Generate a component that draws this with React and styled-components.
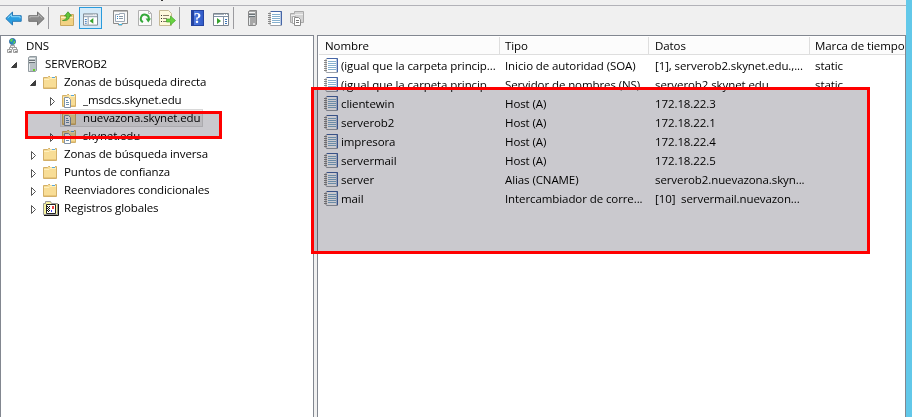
import React from 'react';
import styled, { createGlobalStyle } from 'styled-components';

const Global = createGlobalStyle`
  * { box-sizing: border-box; }
  body { margin: 0; overflow: hidden; background: #f0f0f0; }
`;

const Window = styled.div`
  position: relative;
  width: 912px;
  height: 417px;
  display: flex;
  overflow: hidden;
  background: #62c8e9;
  color: #000;
  font: 11.5px/18px "Open Sans", "Noto Sans", sans-serif;
  letter-spacing: -0.09px;
  white-space: pre;
`;
const Console = styled.div`
  width: 906px;
  display: flex;
  flex-direction: column;
  background: #f0f0f0;
`;
const MenuEdge = styled.div`
  height: 6px;
  padding-left: 161px;
  border-bottom: 1px solid #b2b2b8;
`;
const Descender = styled.i`
  display: block;
  width: 2px;
  height: 1px;
  background: #333;
`;
const Toolbar = styled.div`
  height: 29px;
  flex: none;
  display: flex;
  align-items: flex-start;
  padding-left: 5px;
`;
const Tool = styled.span`
  display: flex;
  flex: none;
  margin-top: ${p => p.$top ?? 4}px;
  margin-left: ${p => p.$gap ?? 0}px;
`;
const Pressed = styled(Tool)`
  width: 23px;
  height: 22px;
  padding: 5px 3px;
  background: #d5eaf8;
  border: 1px solid #2a9bdc;
`;
const Divider = styled.i`
  width: 1px;
  height: 22px;
  margin-top: 1px;
  margin-left: ${p => p.$gap}px;
  background: #9b9b9f;
`;
const Panes = styled.div`
  flex: 1;
  display: flex;
  gap: 3px;
`;
const TreePane = styled.div`
  width: 314px;
  padding-top: 1px;
  background: #fff;
  border: solid #828790;
  border-width: 1px 1px 0;
`;
const ListPane = styled.div`
  width: 589px;
  padding: 1px 0 0 1px;
  background: #fff;
  border: solid #828790;
  border-width: 1px 1px 0;
  overflow: hidden;
`;
const TreeRow = styled.div`
  height: 18px;
  display: flex;
  align-items: center;
  padding-left: ${p => p.$indent}px;
`;
const Arrow = styled.span`
  width: 13px;
  display: flex;
  flex: none;
  padding: ${p => (p.$open ? '1px 0 0' : '2px 0 0 1px')};
`;
const Node = styled.span`
  height: 18px;
  display: flex;
  align-items: center;
  padding: 0 3px 0 ${p => (p.$on ? 2 : 1)}px;
  background: ${p => (p.$on ? '#ededed' : 'transparent')};
  box-shadow: ${p => (p.$on ? 'inset 0 0 0 1px #d8d8d8' : 'none')};
`;
const NodeIcon = styled.span`
  width: ${p => p.$w ?? 21}px;
  display: flex;
  flex: none;
`;
const Label = styled.span`
  letter-spacing: ${p => (p.$tree ? -0.13 : -0.09)}px;
`;
const Grid = styled.div`
  display: grid;
  grid-template-columns: 181px 149px 161px 110px;
`;
const Header = styled(Grid)`
  height: 18px;
  margin-bottom: 1px;
  border-bottom: 1px solid #dedede;
  background: #fcfcfc;
`;
const HeadCell = styled.div`
  line-height: 18px;
  padding-left: ${p => (p.$wide ? 6 : 5)}px;
  border-right: 1px solid #dedede;
`;
const Row = styled(Grid)`
  height: 19px;
  line-height: 19px;
`;
const Cell = styled.div`
  display: flex;
  align-items: center;
  gap: 3px;
  padding-left: ${p => (p.$wide ? 6 : 5)}px;
`;
const Marker = styled.div`
  position: absolute;
  left: ${p => p.$x}px;
  top: ${p => p.$y}px;
  width: ${p => p.$w}px;
  height: ${p => p.$h}px;
  background: #cac9ce;
  mix-blend-mode: multiply;
`;
const Outline = styled(Marker)`
  background: none;
  border: 3px solid #f00;
  mix-blend-mode: normal;
`;

const Svg = ({ w = 16, h = 16, children }) => (
  <svg width={w} height={h} viewBox={`0 0 ${w} ${h}`} fill="none">{children}</svg>
);
const BigArrow = ({ fill, light, stroke, flip }) => (
  <Svg w={17} h={15}>
    <g transform={flip ? 'translate(17 0) scale(-1 1)' : undefined}>
      <path d="M.8 7.5 7.5 1v3.7h8.7v5.6H7.5V14z" fill={fill} stroke={stroke} />
      <path d="m2.7 7 3.8-3.6v2.3h8.6v1.6" stroke={light} />
    </g>
  </Svg>
);
const FolderShape = () => (
  <>
    <path d="M.5 13.5v-11h4l1-1h8v12z" fill="#f8dd96" stroke="#d3b069" />
    <path d="M1 4.5h5l1-1h6" stroke="#fff0bd" />
    <path d="M7 1.5h5" stroke="#fff" /><path d="M9 2.5h3" stroke="#59a5d8" />
    <path d="M1 12.5h12" stroke="#e9c679" />
  </>
);
const Folder = () => <Svg w={14} h={14}><FolderShape /></Svg>;
const Zone = () => (
  <Svg w={14} h={15}>
    <FolderShape />
    <path d="M2.5 4.5h4l2 2v8h-6z" fill="#fff" stroke="#8293a6" />
    <path d="M4 7.5h2M4 9.5h3M4 11.5h3" stroke="#6f90b0" />
  </Svg>
);
const Up = () => (
  <Svg w={15} h={15}>
    <path d="M.5 14.5v-10h5l1-1h7v11z" fill="#f2d283" stroke="#c9a860" />
    <path d="M1 6.5h12" stroke="#fff0bd" />
    <path d="M2.5 9.5C6 9 6.5 7 6.5 5h-2L8 .8 11.5 5h-2c0 3-2 5-7 4.500z" fill="#62c438" stroke="#328d24" strokeWidth=".7" />
  </Svg>
);
const Panel = ({ flip }) => (
  <Svg w={16} h={13}>
    <path d="M.5.5h15v12H.5z" fill="#fff" stroke="#7b858f" />
    <path d="M1 1.500h14" stroke="#a7b2bd" /><path d="M1 3.500h14" stroke="#7f91a6" />
    <path d="M11 1.500h1m1 0h1" stroke="#fff" />
    {flip ? (
      <><path d="M10.5 4v8" stroke="#8795a5" /><path d="M4 5v6l4-3z" fill="#37a22d" /><path d="M12 6.500h2M12 8.500h2M12 10.500h2" stroke="#3b75b7" /></>
    ) : (
      <><path d="M5.500 4v8" stroke="#8795a5" /><path d="M11 5v6L7 8z" fill="#37a22d" /><path d="M2 6.500h2M2 8.500h2M2 10.500h2" stroke="#3b75b7" /></>
    )}
  </Svg>
);
const Props = () => (
  <Svg w={15} h={16}>
    <path d="M.5.5h14v13H9v1.500H5.500v-1.500h-5z" fill="#f8f8f8" stroke="#8b8b8b" />
    <path d="M1 1.500h13" stroke="#bbb" />
    <path d="M2.500 4.500h4v-1h5v8h-9z" fill="#fff" stroke="#9da9b7" />
    <path d="M4 6.500h1M4 8.500h1" stroke="#3186c8" /><path d="M6 6.500h4M6 8.500h4" stroke="#8797a6" />
    <path d="M6 14.500h3" stroke="#31bde8" />
  </Svg>
);
const Refresh = () => (
  <Svg w={14} h={16}>
    <path d="M.5.5h10l3 3v12H.5z" fill="#fbfbfb" stroke="#b0b0b0" />
    <path d="M10.5.5v3h3" stroke="#bbb" />
    <path d="M5 12.200A4 4 0 1 1 10.800 9" stroke="#35a93b" strokeWidth="2" />
    <path d="M7.600 8.500H13L10.300 12.500z" fill="#35a93b" />
  </Svg>
);
const Export = () => (
  <Svg w={17} h={16}>
    <path d="M.5.5h9l3 3v12H.5z" fill="#fff9dc" stroke="#c6b994" />
    <path d="M2 5.500h1M2 8.500h1M2 11.500h1" stroke="#333" /><path d="M4 5.500h6M4 8.500h4M4 11.500h4" stroke="#8c806a" />
    <path d="M7.500 9h4V6l5 4.500-5 4.500v-3h-4z" fill="#68d340" stroke="#43a52a" strokeWidth=".7" />
  </Svg>
);
const HelpBox = styled.span`
  width: 13px;
  height: 16px;
  background: linear-gradient(90deg, #2443a0 2px, #4d78df 2px, #305bc8);
  border: 1px solid #2443a0;
  color: #fff;
  font: bold 15px/14px "Liberation Serif", serif;
  text-align: center;
`;
const Server = ({ gray }) => (
  <Svg w={9} h={16}>
    <path d="M.5 1.500 2 .5h6.500v14l-1 1h-7z" fill={gray ? '#a7a7a7' : '#b9c1c5'} stroke={gray ? '#888' : '#929ba0'} />
    <path d="M1 2.500h6" stroke="#f2f4f4" /><path d="M1 4.500h6M1 6.500h6" stroke="#697277" /><path d="M1 5.500h6" stroke="#e5e8e9" />
    <path d="M1.500 8v7" stroke="#e6eaec" /><path d="M5 13h2v2H5z" fill={gray ? '#ddd' : '#62d42c'} />
  </Svg>
);
const Notebook = () => (
  <Svg w={14} h={15}>
    <path d="M2.500.5h11v14h-11z" fill="#fff" stroke="#9ba1aa" />
    <path d="M3 .5h10.500V14" stroke="#4666a7" /><path d="M12.500 1v13" stroke="#b8c8e2" />
    <path d="M4 3.500h8M4 5.500h8M4 7.500h8M4 9.500h8M4 11.500h8" stroke="#86b1cf" />
    <path d="M0 2.500h3M0 4.500h3M0 6.500h3M0 8.500h3M0 10.500h3M0 12.500h3" stroke="#888" />
    <path d="M1 1.500h2M1 3.500h2M1 5.500h2M1 7.500h2M1 9.500h2M1 11.500h2M1 13.500h2" stroke="#d0d0d0" />
  </Svg>
);
const Copies = () => (
  <Svg w={15} h={15}>
    <path d="M.5 11.500v-9h4v-2h9v11z" fill="#d4d4d4" stroke="#aaa" />
    <path d="M5 3.500h8M1 4.500h4" stroke="#eee" />
    <path d="M2.500 5.500h3v7h-3z" fill="#fff" stroke="#aaa" />
    <path d="M4.500 6.500h4l2 2v6h-6z" fill="#fff" stroke="#8b8b8b" /><path d="M6 9.500h3M6 11.500h3" stroke="#777" />
  </Svg>
);
const Dns = () => (
  <Svg w={13} h={16}>
    <circle cx="5.500" cy="3.500" r="3" fill="#268bc7" stroke="#316b9d" />
    <path d="M4 1h2L5 4 3 3zm3 2h1v2L6 6z" fill="#61d74b" />
    <path d="M5.500 6.500v5M2.500 12V9.500h7V12" stroke="#999" />
    <path d="M3.500 7.500h4v2h-4zM.5 11.500h4v3h-4zM6.500 11.500h4v3h-4z" fill="#eee" stroke="#a0a0a0" />
    <path d="M2 13.500h2M8 13.500h2" stroke="#888" />
  </Svg>
);
const Logs = () => (
  <Svg w={16} h={15}>
    <path d="M.5 13.500v-11h2v-2h5l1 2h6v11z" fill="#f8f4a0" stroke="#999" />
    <path d="M1 14.500h14.500V3" stroke="#111" />
    <path d="M3.500 3.500h9v9h-9z" fill="#fff" stroke="#222" />
    <path d="M4 5.500h1m1 0h1M5 6.500h1M4 7.500h1m1 0h1M5 8.500h1M4 9.500h1m1 0h1M5 10.500h1" stroke="#111" />
    <path d="M9 5h2v3H9z" fill="#e44" /><path d="M8 9h1v2H8z" fill="#44e" />
  </Svg>
);
const Expander = ({ open }) => (
  <Svg w={8} h={10}>
    {open ? <path d="M6.500 2.500v5h-5z" fill="#404040" stroke="#222" strokeWidth=".8" /> : <path d="m1.500 1.500 4 4-4 4z" fill="#fff" stroke="#555" />}
  </Svg>
);

const tree = [
  ['DNS', 5, null, Dns, 19],
  ['SERVEROB2', 9, true, Server, 17, 4],
  ['Zonas de búsqueda directa', 28, true, Folder],
  ['_msdcs.skynet.edu', 47, false, Zone],
  ['nuevazona.skynet.edu', 59, null, Zone],
  ['skynet.edu', 47, false, Zone],
  ['Zonas de búsqueda inversa', 28, false, Folder],
  ['Puntos de confianza', 28, false, Folder],
  ['Reenviadores condicionales', 28, false, Folder],
  ['Registros globales', 28, false, Logs],
];
const columns = ['Nombre', 'Tipo', 'Datos', 'Marca de tiempo'];
const records = [
  ['(igual que la carpeta princip...', 'Inicio de autoridad (SOA)', '[1], serverob2.skynet.edu.,...', 'static'],
  ['(igual que la carpeta princip...', 'Servidor de nombres (NS)', 'serverob2.skynet.edu', 'static'],
  ['clientewin', 'Host (A)', '172.18.22.3', ''],
  ['serverob2', 'Host (A)', '172.18.22.1', ''],
  ['impresora', 'Host (A)', '172.18.22.4', ''],
  ['servermail', 'Host (A)', '172.18.22.5', ''],
  ['server', 'Alias (CNAME)', 'serverob2.nuevazona.skyn...', ''],
  ['mail', 'Intercambiador de corre...', '[10]  servermail.nuevazon...', ''],
];

const IconSlot = styled(NodeIcon)`
  margin-left: ${p => p.$pad ?? 0}px;
`;

export default function App() {
  return (
    <Window>
      <Global />
      <Console>
        <MenuEdge><Descender /></MenuEdge>
        <Toolbar>
          <Tool $top={5}><BigArrow fill="#2a9de0" light="#8dd9fb" stroke="#2878b5" /></Tool>
          <Tool $top={5} $gap={6}><BigArrow flip fill="#8b8b8b" light="#b9b9b9" stroke="#707070" /></Tool>
          <Divider $gap={3} />
          <Tool $top={5} $gap={11}><Up /></Tool>
          <Pressed $top={1} $gap={4}><Panel /></Pressed>
          <Tool $gap={11}><Props /></Tool>
          <Tool $gap={10}><Refresh /></Tool>
          <Tool $gap={7}><Export /></Tool>
          <Divider $gap={3} />
          <Tool $gap={11}><HelpBox>?</HelpBox></Tool>
          <Tool $top={7} $gap={9}><Panel flip /></Tool>
          <Divider $gap={4} />
          <Tool $gap={14}><Server gray /></Tool>
          <Tool $top={5} $gap={11}><Notebook /></Tool>
          <Tool $top={5} $gap={8}><Copies /></Tool>
        </Toolbar>
        <Panes>
          <TreePane>
            {tree.map(([name, indent, open, Icon, width, pad]) => (
              <TreeRow key={name} $indent={indent}>
                {open !== null && <Arrow $open={open}><Expander open={open} /></Arrow>}
                <Node $on={name.startsWith('nueva')}>
                  <IconSlot $w={width} $pad={pad}><Icon /></IconSlot>
                  <Label $tree>{name}</Label>
                </Node>
              </TreeRow>
            ))}
          </TreePane>
          <ListPane>
            <Header>
              {columns.map((h, i) => (
                <HeadCell key={h} $wide={i === 0 || i === 2}>{h}</HeadCell>
              ))}
            </Header>
            {records.map((r, i) => (
              <Row key={i}>
                {r.map((text, c) => (
                  <Cell key={c} $wide={c === 2}>
                    {c === 0 && <Notebook />}
                    <Label>{text}</Label>
                  </Cell>
                ))}
              </Row>
            ))}
          </ListPane>
        </Panes>
      </Console>
      <Marker $x={25} $y={111} $w={197} $h={28} />
      <Outline $x={25} $y={111} $w={197} $h={28} />
      <Marker $x={311} $y={87} $w={559} $h={167} />
      <Outline $x={311} $y={87} $w={559} $h={167} />
    </Window>
  );
}
